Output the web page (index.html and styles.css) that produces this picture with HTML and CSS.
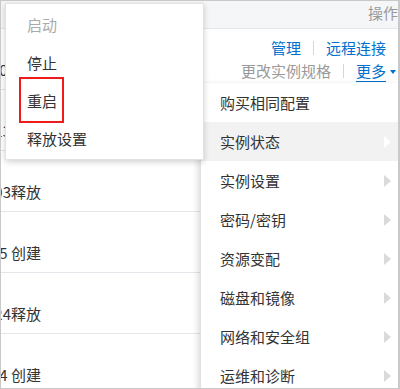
FILE: index.html
```html
<!DOCTYPE html>
<html lang="zh-CN">
<head>
  <meta charset="UTF-8">
  <meta name="viewport" content="width=device-width, initial-scale=1.0">
  <title>实例列表 - 更多操作</title>
  <link rel="stylesheet" href="styles.css">
</head>
<body>
  <div class="frame">
    <div class="grid">
      <div class="head">
        <span class="head-cell">操作</span>
      </div>

      <div class="row">
        <div class="time"><span>2019-06-21 16:30 创建</span></div>
        <div class="ops">
          <div class="ops-line">
            <a class="link">管理</a><i class="sep"></i><a class="link">远程连接</a>
          </div>
          <div class="ops-line">
            <span class="muted">更改实例规格</span><i class="sep"></i><a class="link more">更多</a><i class="caret"></i>
          </div>
        </div>
      </div>
      <div class="row">
        <div class="time"><span>2019-06-20 18:13释放</span></div>
      </div>
      <div class="row">
        <div class="time"><span>2019-06-20 11:03释放</span></div>
      </div>
      <div class="row">
        <div class="time"><span>2019-06-19 09:45 创建</span></div>
      </div>
      <div class="row">
        <div class="time"><span>2019-06-18 17:24释放</span></div>
      </div>
      <div class="row">
        <div class="time"><span>2019-06-17 10:14 创建</span></div>
      </div>
    </div>

    <!-- 实例状态 子菜单 -->
    <ul class="menu menu-state">
      <li class="item disabled">启动</li>
      <li class="item">停止</li>
      <li class="item"><span class="mark">重启</span></li>
      <li class="item">释放设置</li>
    </ul>

    <!-- 更多 下拉菜单 -->
    <ul class="menu menu-more">
      <li class="item">购买相同配置</li>
      <li class="item sub active">实例状态</li>
      <li class="item sub">实例设置</li>
      <li class="item sub">密码/密钥</li>
      <li class="item sub">资源变配</li>
      <li class="item sub">磁盘和镜像</li>
      <li class="item sub">网络和安全组</li>
      <li class="item sub">运维和诊断</li>
    </ul>
  </div>
</body>
</html>
```

FILE: styles.css
```css
body {
  margin: 0;
  font-family: "Noto Sans CJK SC", "Liberation Sans", sans-serif;
  font-size: 15px;
  color: #333;
  background: #fff;
}
.frame {
  position: relative;
  width: 400px;
  height: 389px;
  box-sizing: border-box;
  border: 1px solid #c9c9c9;
  border-right-width: 2px;
  overflow: hidden;
  background: #fff;
}
.head {
  height: 27px;
  line-height: 24px;
  padding-left: 367px;
  white-space: nowrap;
  background: #f5f6f7;
  border-bottom: 1px solid #e3e6ea;
  color: #999;
}
.row {
  display: flex;
  height: 60px;
  border-bottom: 1px solid #e3e6ea;
}
.time {
  flex: none;
  width: 40px;
  display: flex;
  justify-content: flex-end;
  white-space: nowrap;
  padding-top: 31px;
  line-height: 20px;
}
.ops {
  margin-left: auto;
  padding: 7px 12px 0 0;
  text-align: right;
  white-space: nowrap;
}
.ops-line {
  display: flex;
  justify-content: flex-end;
  align-items: center;
  height: 23px;
}
.link {
  color: #0070cc;
}
.more {
  text-decoration: underline;
  text-underline-offset: 4px;
}
.muted {
  color: #999;
}
.sep {
  display: inline-block;
  width: 1px;
  height: 14px;
  margin: 0 12px;
  background: #d6d6d6;
}
.caret {
  width: 0;
  height: 0;
  margin: 2px -10px 0 4px;
  border-top: 4px solid #0070cc;
  border-left: 3px solid transparent;
  border-right: 3px solid transparent;
}
.menu {
  position: absolute;
  margin: 0;
  list-style: none;
  background: #fff;
  box-sizing: border-box;
}
.menu-state {
  left: 4px;
  top: 2px;
  width: 199px;
  padding: 2px 0 1px;
  border: 1px solid #e2e2e2;
  box-shadow: 0 2px 6px rgba(0, 0, 0, 0.18);
  z-index: 2;
}
.menu-state .item {
  height: 38px;
  line-height: 38px;
  padding-left: 21px;
}
.menu-more {
  left: 199px;
  top: 82px;
  width: 200px;
  padding: 0;
  border-left: 1px solid #e2e2e2;
  box-shadow: -2px 2px 6px rgba(0, 0, 0, 0.15);
  z-index: 1;
}
.menu-more .item {
  position: relative;
  height: 39px;
  line-height: 39px;
  padding-left: 19px;
}
.disabled {
  color: #aaa;
}
.mark {
  position: relative;
  display: inline-block;
  vertical-align: top;
  line-height: 38px;
}
.mark::after {
  content: "";
  position: absolute;
  left: -8px;
  right: -7px;
  top: -5px;
  bottom: -3px;
  border: 2px solid #f21b1b;
}
.sub::after {
  content: "";
  position: absolute;
  right: 9px;
  top: 14px;
  border-left: 7px solid #dadada;
  border-top: 6px solid transparent;
  border-bottom: 6px solid transparent;
}
.active {
  background: #f2f2f2;
}
.active::after {
  border-left-color: #fff;
}
```
